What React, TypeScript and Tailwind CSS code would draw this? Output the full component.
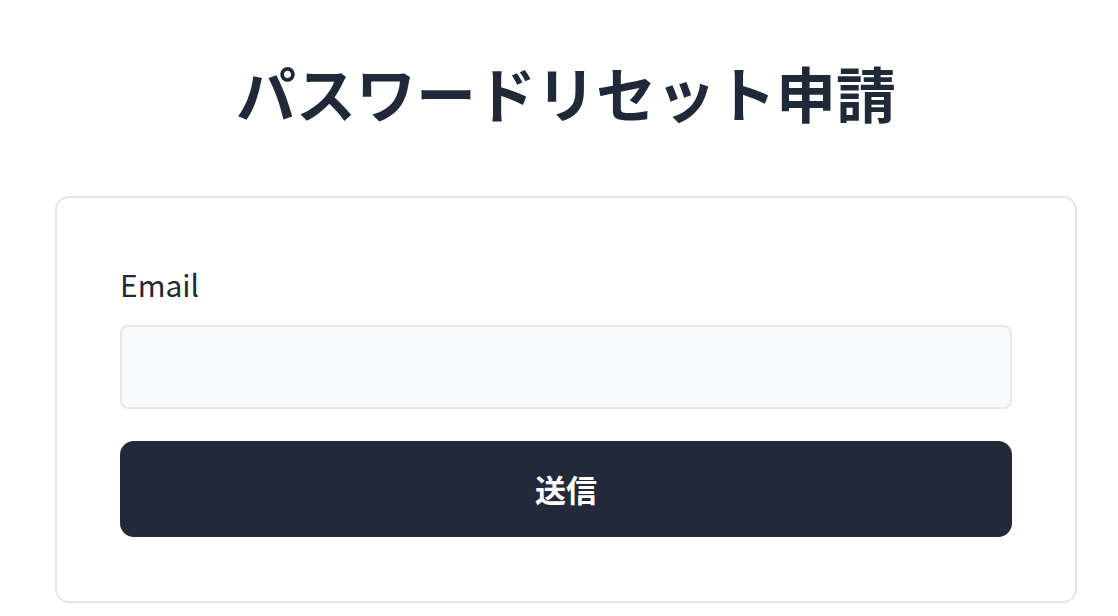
import React, {useState} from "react";

export default function App() {
    const [email, setEmail] = useState("");

    return (
        <div className="min-h-screen bg-white font-['Noto_Sans_CJK_JP','Noto_Sans',sans-serif] text-[#1f2937]">
            <div className="ml-[55px] w-[1022px] pt-[62px]">
                <h1 className="text-center text-[60px] leading-[60px] font-bold text-[#1f2937]">パスワードリセット申請</h1>
                <div className="mt-[74px] rounded-[14px] border-2 border-[#e5e7eb] px-[63px] pt-[66px] pb-[64px]">
                    <label htmlFor="email" className="block text-[30px] leading-[40px] text-[#1f2937]">Email</label>
                    <input
                        id="email"
                        type="email"
                        value={email}
                        onChange={(e) => setEmail(e.target.value)}
                        className="mt-[21px] block h-[84px] w-full rounded-[8px] border-2 border-[#e5e7eb] bg-[#f9fafb] px-4 text-[30px] outline-none"
                    />
                    <button
                        type="submit"
                        className="mt-[32px] flex h-[96px] w-full items-center justify-center rounded-[14px] bg-[#222938] text-[31px] font-bold text-white"
                    >
                        送信
                    </button>
                </div>
            </div>
        </div>
    );
}
